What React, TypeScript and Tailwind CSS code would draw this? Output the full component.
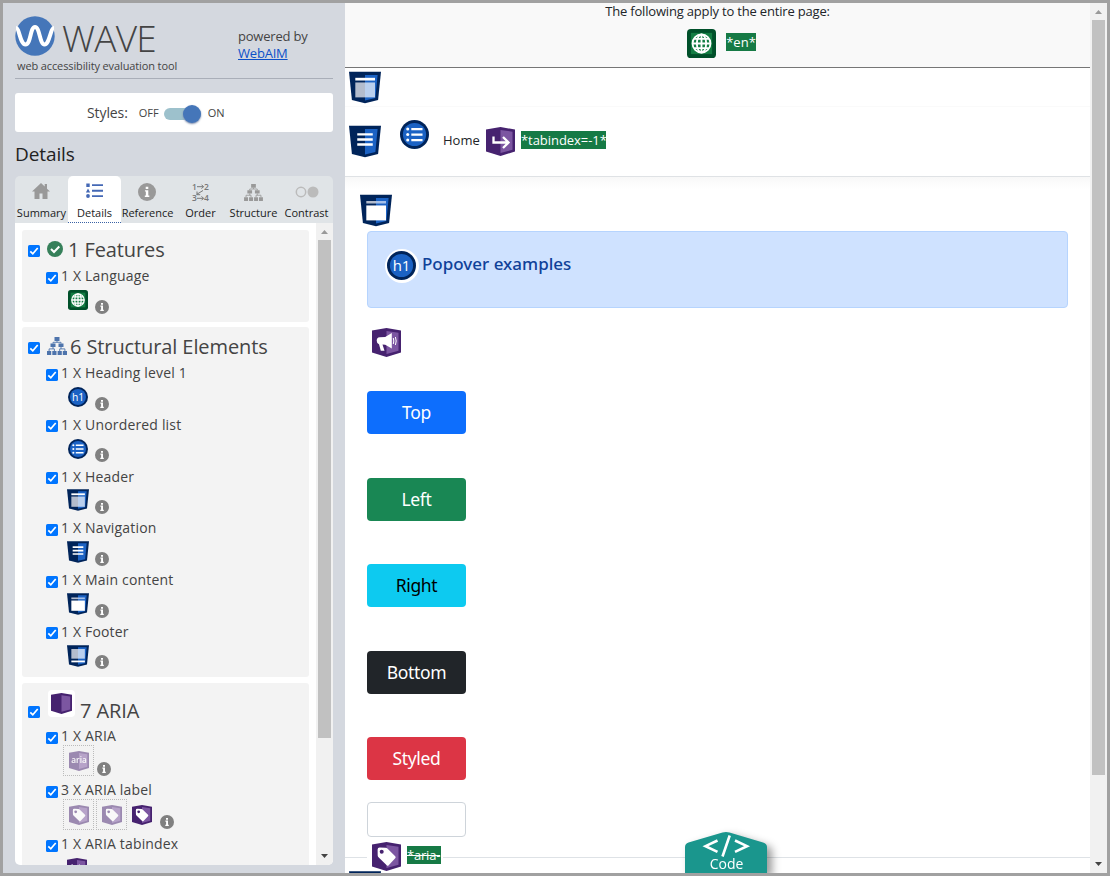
import type { ReactNode } from 'react'

type ShieldKind = 'header' | 'nav' | 'main' | 'footer'
type AriaKind = 'blank' | 'aria' | 'label' | 'tabindex' | 'live'

const structure: { label: string; icon: ReactNode }[] = [
  { label: '1 X Heading level 1', icon: <HeadingIcon className="ml-[2.5px] size-5" /> },
  { label: '1 X Unordered list', icon: <ListIcon className="ml-[2.5px] size-5" /> },
  { label: '1 X Header', icon: <Shield kind="header" className="-mt-0.5 ml-[1.5px] size-[22px]" /> },
  { label: '1 X Navigation', icon: <Shield kind="nav" className="-mt-px ml-[1.5px] size-[22px]" /> },
  { label: '1 X Main content', icon: <Shield kind="main" className="-mt-px ml-[1.5px] size-[22px]" /> },
  { label: '1 X Footer', icon: <Shield kind="footer" className="-mt-px ml-[1.5px] size-[22px]" /> },
]

const buttons = [
  { label: 'Top', style: 'bg-[#0d6efd] text-white' },
  { label: 'Left', style: 'bg-[#198754] text-white' },
  { label: 'Right', style: 'bg-[#0dcaf0] text-black' },
  { label: 'Bottom', style: 'bg-[#212529] text-white' },
  { label: 'Styled', style: 'bg-[#dc3545] text-white' },
]

function Check() {
  return (
    <svg className="size-3 shrink-0" viewBox="0 0 12 12" fill="none">
      <rect width="12" height="12" rx="1.6" fill="#0075ff" />
      <path d="M2.3 6.3 4.8 8.8 9.7 3" stroke="#fff" strokeWidth="1.7" />
    </svg>
  )
}

function Info({ className = 'size-3.5' }: { className?: string }) {
  return (
    <svg className={className} viewBox="0 0 14 14">
      <circle cx="7" cy="7" r="7" fill="currentColor" />
      <path d="M5.4 5.6H8v4.2h.8v1.1H5.3V9.8h.8V6.700h-.7zM6 2.900h2v1.800H6z" fill="#fff" />
    </svg>
  )
}

function Globe({ className }: { className: string }) {
  return (
    <svg className={className} viewBox="0 0 30 30" fill="none">
      <rect width="30" height="30" rx="4" fill="#00502a" />
      <path d="M4 4h22v22H4z" fill="#137d43" />
      <g stroke="#fff" strokeWidth="1.9">
        <circle cx="15" cy="15" r="9.3" />
        <ellipse cx="15" cy="15" rx="4.8" ry="9.3" />
        <path d="M15 5.7v18.6M5.7 15h18.6M7.4 10.2h15.2M7.4 19.8h15.2" />
      </g>
    </svg>
  )
}

function Tree({ className }: { className: string }) {
  return (
    <svg className={className} viewBox="0 0 20 18" fill="currentColor">
      <path d="M7.5 0h5v4h-5zM3.5 6.5h5V10h-5zM11.5 6.5h5V10h-5zM0 14h4.2v4H0zM5.3 14h4.2v4H5.3zM10.6 14h4.2v4h-4.2zM15.8 14H20v4h-4.2z" />
      <path
        d="M10 4v1.3M6 6.5V5.3h8v1.2M6 10v1.9M2.1 14v-2.1h5.3V14M14 10v1.9M12.7 14v-2.1h5.2V14"
        fill="none"
        stroke="currentColor"
        strokeWidth=".9"
      />
    </svg>
  )
}

function HeadingIcon({ className }: { className: string }) {
  return (
    <svg className={className} viewBox="0 0 30 30">
      <circle cx="15" cy="15" r="15" fill="#00245a" />
      <circle cx="15" cy="15" r="12" fill="#1b62c4" />
      <text x="15" y="21" fill="#fff" fontSize="15.500" textAnchor="middle" fontFamily="Open Sans, sans-serif">
        h1
      </text>
    </svg>
  )
}

function ListIcon({ className }: { className: string }) {
  return (
    <svg className={className} viewBox="0 0 30 30">
      <circle cx="15" cy="15" r="15" fill="#00245a" />
      <circle cx="15" cy="15" r="12" fill="#1b62c4" />
      <g fill="#fff">
        <circle cx="8" cy="9.3" r="1.6" />
        <circle cx="8" cy="15" r="1.6" />
        <circle cx="8" cy="20.7" r="1.6" />
        <path d="M11.7 8.2h11.6v2.3H11.7zM11.7 13.9h11.6v2.3H11.7zM11.7 19.6h11.6v2.3H11.7z" />
      </g>
    </svg>
  )
}

function Shield({ kind, className }: { kind: ShieldKind; className: string }) {
  return (
    <svg className={className} viewBox="0 0 33 33">
      <path d="M0 .3h33l-3 29L16.5 32.7 3 29.3z" fill="#00245a" />
      <path d="M16.5 3.5h13l-2.3 23.7-10.7 2.6z" fill="#1b62c4" />
      {kind === 'nav' && (
        <path d="M8.5 8h16v2.4h-16zM8.5 13.2h16v2.4h-16zM8.5 18.4h16v2.4h-16z" fill="#fff" />
      )}
      {kind === 'header' && (
        <>
          <path d="M6.5 6.5h20.3v2.8H6.5z" fill="#fff" />
          <path d="M6.5 11.3h10v15.4h-10z" fill="#b3bccd" />
          <path d="M16.5 11.3h10.3v15.4H16.5z" fill="#b9cfee" />
        </>
      )}
      {kind === 'main' && (
        <>
          <path d="M6.5 6.7h10v2.6h-10z" fill="#b3bccd" />
          <path d="M16.5 6.7h10.3v2.6H16.5z" fill="#a4c0ea" />
          <path d="M6.5 11.3h20.3v15.4H6.5z" fill="#fff" />
        </>
      )}
      {kind === 'footer' && (
        <>
          <path d="M6.5 6h10v14.5h-10z" fill="#b3bccd" />
          <path d="M16.5 6h10.3v14.5H16.5z" fill="#b9cfee" />
          <path d="M6.5 23.3h20.3V26H6.5z" fill="#fff" />
        </>
      )}
    </svg>
  )
}

function Aria({ kind, className }: { kind: AriaKind; className: string }) {
  return (
    <svg className={className} viewBox="0 0 29 29" fill="none">
      <path d="M0 2.5 14.5 0 29 2.5v22L14.5 29 0 24.5z" fill="#46226f" />
      <path d="M14.5 3 26.5 4.7v18L14.5 26z" fill="#7c56a1" />
      {kind === 'aria' && (
        <text x="14.5" y="17.5" fill="#fff" fontSize="12" fontWeight="600" textAnchor="middle" fontFamily="Open Sans, sans-serif">
          aria
        </text>
      )}
      {kind === 'label' && (
        <>
          <path
            d="M5.6 7.5q0-2 2-2l6 .2q1 0 1.8.8l7.8 7.7q1 1 0 2l-6.5 7q-1 1-2 0l-8.2-8q-.7-.7-.8-1.7z"
            fill="#fff"
          />
          <circle cx="9.7" cy="9.8" r="2" fill="#46226f" />
        </>
      )}
      {kind === 'tabindex' && (
        <path d="M7.5 9.500v6h14M17 10l5.500 5.500-5.500 5.500" stroke="#fff" strokeWidth="2.300" />
      )}
      {kind === 'live' && (
        <>
          <path
            d="M19.8 5v15.5l-6.6-3.8-2.7-.2 2 6.2H8.8L7 16.3q-2.3-.9-2.3-3.6 0-3 2.9-3.4l5.6-.3z"
            fill="#fff"
          />
          <path d="M21.3 10q1 3 0 6M23.4 9q1.6 4 0 8" stroke="#fff" />
        </>
      )}
    </svg>
  )
}

function Ghost({ kind }: { kind: AriaKind }) {
  return (
    <span className="mr-0.5 grid size-[31px] place-items-center border border-dotted border-[#bbb]">
      <Aria kind={kind} className="size-5 opacity-50" />
    </span>
  )
}

function Detail({ label, children }: { label: string; children: ReactNode }) {
  return (
    <li>
      <div className="flex h-[18px] items-center gap-[3px] pl-6 text-[14px] leading-[18px]">
        <span className="mt-[3px]">
          <Check />
        </span>
        <span className="tracking-[0.17px] whitespace-nowrap">{label}</span>
      </div>
      {children}
    </li>
  )
}

function DetailIcon({ children }: { children: ReactNode }) {
  return (
    <div className="flex h-[33.8px] items-start pl-[43px] pt-[5px] text-[#808080]">
      <span className="flex w-[30px] shrink-0">{children}</span>
      <Info className="mt-[9.5px] size-3.5" />
    </div>
  )
}

function Sidebar() {
  return (
    <aside className="flex w-[342px] shrink-0 flex-col bg-[#d4d8df] pl-3 text-[#444]">
      <div className="flex h-[76px] w-[318px] border-b border-[#a9aeb8]">
        <div className="w-[223px]">
          <div className="flex h-[54px] items-start gap-[7px] pt-[13px]">
            <svg className="size-10" viewBox="0 0 40 40" fill="none">
              <circle cx="20" cy="20" r="19.7" fill="#4576b9" />
              <path
                d="M1 12C4.5 12 5 28.5 10.5 28.5S15 11 20 11s4.5 17.5 9.5 17.5S35.5 12 39 12"
                stroke="#fff"
                strokeWidth="4"
              />
            </svg>
            <span className="mt-1 text-[37px] leading-9 font-light tracking-[-0.8px]">WAVE</span>
          </div>
          <p className="pl-0.5 text-[11px] leading-[18px] tracking-[-0.12px] whitespace-nowrap">
            web accessibility evaluation tool
          </p>
        </div>
        <p className="pt-[25px] text-[13px] leading-[17px] tracking-[-0.2px]">
          powered by
          <br />
          <a href="#webaim" className="text-[#0b50c8] underline">
            WebAIM
          </a>
        </p>
      </div>

      <div className="mt-3.5 flex h-[39px] w-[318px] items-center rounded-[3px] bg-white pl-[72px] text-[11px]">
        <span className="mr-[11px] text-[14px] tracking-[-0.1px]">Styles:</span>
        <span className="mt-0.5">OFF</span>
        <span className="mt-0.5 ml-[5px] flex h-3 w-[37px] items-center justify-end rounded-full bg-[#9dc1cc]">
          <span className="size-[18px] shrink-0 rounded-full bg-[#4576b9] shadow-[0_1px_2px_#7788aa]" />
        </span>
        <span className="mt-0.5 ml-[7px]">ON</span>
      </div>

      <h2 className="h-11 pt-2.5 text-[19px] leading-6 tracking-[-0.1px] text-[#222]">Details</h2>

      <nav className="grid h-[47px] w-[318px] grid-cols-6 rounded-t-[5px] bg-[#e0e4e7] text-[11px] text-[#1b1b1b]">
        <Tab label="Summary">
          <svg className="mr-0.5 mb-0.5 h-4 w-[18px]" viewBox="0 0 18 16" fill="currentColor">
            <path d="M9 0 0 8.5h2.5V16h5v-5.5h3V16h5V8.5H18l-3-2.8V1h-2.3v2.5z" />
          </svg>
        </Tab>
        <Tab label="Details" active>
          <svg className="mb-[3px] h-4 w-[17px]" viewBox="0 0 17 16" fill="currentColor">
            <path d="M.3.5h3.4v3.4H.3zM2 5.5l2.2 4H-.2zM6 1.2h11v1.9H6zM6 6.8h11v1.9H6zM6 12.2h11v1.9H6z" />
            <circle cx="2" cy="13" r="1.9" />
          </svg>
        </Tab>
        <Tab label="Reference">
          <Info className="mr-0.5 size-[18px]" />
        </Tab>
        <Tab label="Order">
          <svg className="-mt-px h-[22px] w-5 text-[#777]" viewBox="0 -2 20 22" fill="currentColor">
            <g fontSize="8.5" fontWeight="600" fontFamily="Open Sans, sans-serif">
              <text x="1" y="6.7">1</text>
              <text x="13" y="6.7">2</text>
              <text x="1" y="18.3">3</text>
              <text x="13" y="18.3">4</text>
            </g>
            <path
              d="M6 3.7h6.5M10.5 1.7l2 2-2 2M6 15.3h6.5M10.5 13.3l2 2-2 2M12 7.5l-6.500 4M6 8.500v3.200h3.200"
              fill="none"
              stroke="currentColor"
            />
          </svg>
        </Tab>
        <Tab label="Structure">
          <Tree className="h-[17px] w-[19px]" />
        </Tab>
        <Tab label="Contrast">
          <svg className="h-3 w-6 text-[#bbb]" viewBox="0 0 24 12">
            <circle cx="6" cy="6" r="4.7" fill="none" stroke="currentColor" strokeWidth="1.5" />
            <circle cx="18" cy="6" r="5.5" fill="currentColor" />
          </svg>
        </Tab>
      </nav>

      <div className="flex h-[642px] w-[318px] overflow-hidden rounded-b-[5px] bg-white">
        <div className="w-[301px] pl-[7px] pt-[7px]">
          <section className="mb-[5px] h-[92px] w-[287px] rounded-[3px] bg-[#f3f3f3]">
            <Category title="1 Features">
              <svg className="mr-[5px] mb-px size-4" viewBox="0 0 16 16" fill="none">
                <circle cx="8" cy="8" r="8" fill="#36805a" />
                <path d="m4 8 3 3 5.3-5.5" stroke="#fff" strokeWidth="2" />
              </svg>
            </Category>
            <ul>
              <Detail label="1 X Language">
                <DetailIcon>
                  <Globe className="ml-[2.5px] size-5" />
                </DetailIcon>
              </Detail>
            </ul>
          </section>

          <section className="mb-1.5 h-[350px] w-[287px] rounded-[3px] bg-[#f3f3f3]">
            <Category title="6 Structural Elements">
              <Tree className="mr-[3px] mb-0.5 h-[18px] w-5 text-[#4e74ac]" />
            </Category>
            <ul>
              {structure.map((item) => (
                <Detail key={item.label} label={item.label}>
                  <DetailIcon>{item.icon}</DetailIcon>
                </Detail>
              ))}
            </ul>
          </section>

          <section className="h-[240px] w-[287px] rounded-[3px] bg-[#f3f3f3]">
            <div className="flex h-11 items-start pl-1.5">
              <span className="mt-[23px] mr-2">
                <Check />
              </span>
              <span className="mt-[7px] grid size-[27px] place-items-center rounded-sm bg-white">
                <Aria kind="blank" className="size-[21px]" />
              </span>
              <h3 className="mt-3.5 ml-[5px] text-[20px] leading-7 tracking-[-0.1px]">7 ARIA</h3>
            </div>
            <ul>
              <Detail label="1 X ARIA">
                <div className="flex h-9 items-start pl-[41px] text-[#808080]">
                  <Ghost kind="aria" />
                  <Info className="mt-[17px] ml-px size-3.5" />
                </div>
              </Detail>
              <Detail label="3 X ARIA label">
                <div className="flex h-9 items-start pl-[41px] text-[#808080]">
                  <Ghost kind="label" />
                  <Ghost kind="label" />
                  <Aria kind="label" className="mt-1.5 ml-[3px] size-5" />
                  <Info className="mt-4 ml-2 size-3.5" />
                </div>
              </Detail>
              <Detail label="1 X ARIA tabindex">
                <div className="flex pl-[45px] pt-[5px]">
                  <Aria kind="tabindex" className="size-5" />
                </div>
              </Detail>
            </ul>
          </section>
        </div>
        <Scrollbar thumb="h-[498px]" />
      </div>
    </aside>
  )
}

function Tab({ label, active, children }: { label: string; active?: boolean; children: ReactNode }) {
  return (
    <a
      href="#tab"
      className={
        active
          ? 'flex flex-col items-center rounded-t-[5px] border-b border-dotted border-[#3a62a5] bg-white text-[#4468b5]'
          : 'flex flex-col items-center text-[#999]'
      }
    >
      <span className="flex h-[30px] shrink-0 items-center pt-0.5">{children}</span>
      <span className="leading-[14px] whitespace-nowrap text-[#1b1b1b]">{label}</span>
    </a>
  )
}

function Category({ title, children }: { title: string; children: ReactNode }) {
  return (
    <div className="flex h-[37px] items-center pl-1.5 pt-0.5">
      <span className="mt-[3px] mr-[7px]">
        <Check />
      </span>
      {children}
      <h3 className="text-[20px] leading-7 tracking-[-0.1px]">{title}</h3>
    </div>
  )
}

function Scrollbar({ thumb }: { thumb: string }) {
  return (
    <div className="flex w-[17px] shrink-0 flex-col items-center bg-[#f1f1f1]">
      <svg className="h-[17px] w-[7px] shrink-0" viewBox="0 0 7 17">
        <path d="M0 11h7L3.5 7z" fill="#999" />
      </svg>
      <div className={`w-[13px] shrink-0 bg-[#c1c1c1] ${thumb}`} />
      <svg className="mt-auto h-[17px] w-[7px] shrink-0" viewBox="0 0 7 17">
        <path d="M0 6h7l-3.5 4z" fill="#444" />
      </svg>
    </div>
  )
}

function Page() {
  return (
    <main className="relative flex w-[745px] shrink-0 flex-col overflow-hidden bg-white text-[13px] text-[#212529]">
      <div className="h-[65px] shrink-0 border-b border-[#767676] bg-[#f9f9f9] text-center">
        <p className="-mt-px leading-[18px] tracking-[-0.18px]">The following apply to the entire page:</p>
        <div className="mt-[9px] flex justify-center gap-2.5 pl-2">
          <Globe className="size-[29px]" />
          <span className="mt-1 h-[18px] bg-[#167a45] leading-[18px] text-white">*en*</span>
        </div>
      </div>

      <header className="h-[109px] shrink-0 border-b border-[#dfe2e5]">
        <div className="h-[38px] pt-[3px] pl-1">
          <Shield kind="header" className="h-[33px] w-8" />
        </div>
        <nav className="flex h-[70px] items-start border-t border-[#fafafa] pl-1">
          <Shield kind="nav" className="mt-[18px] h-[33px] w-8" />
          <ListIcon className="mt-[13px] ml-[19px] size-[29px]" />
          <a href="#home" className="mt-6 ml-3.5 w-[38px] leading-[18px]">
            Home
          </a>
          <Aria kind="tabindex" className="mt-5 ml-[5px] size-[29px]" />
          <span className="mt-6 ml-1.5 h-[18px] w-[85px] bg-[#167a45] leading-[18px] tracking-[-0.05px] whitespace-nowrap text-white">
            *tabindex=-1*
          </span>
        </nav>
      </header>

      <div className="flex flex-col items-start bg-linear-to-b from-[#f8f8f8] to-white to-[12px] pl-[22px] pt-[17px]">
        <Shield kind="main" className="-ml-[7px] h-[33px] w-8" />
        <div className="mt-1 flex h-[77px] w-[701px] items-start rounded border border-[#b6d4fe] bg-[#cfe2ff] pt-4 pl-[17px]">
          <span className="mt-px flex size-[34px] rounded-full bg-white pt-0.5 pl-0.5">
            <HeadingIcon className="size-[29px]" />
          </span>
          <h1 className="ml-[3px] font-['Noto_Sans'] text-[17px] leading-8 font-medium text-[#0f4199]">
            Popover examples
          </h1>
        </div>
        <Aria kind="live" className="mt-5 ml-[5px] size-[29px]" />
        <div className="mt-[34px] flex flex-col gap-[43.5px] font-['Noto_Sans'] text-[17.5px] tracking-[-0.35px]">
          {buttons.map((button) => (
            <button key={button.label} className={`h-[43px] w-[99px] rounded ${button.style}`}>
              {button.label}
            </button>
          ))}
        </div>
        <input className="mt-[22px] h-[35px] w-[99px] rounded border border-[#ced4da]" aria-label="search" />
        <div className="mt-[5px] ml-[5px] flex w-[70px] shrink-0 items-start gap-1.5">
          <Aria kind="label" className="size-[29px] shrink-0" />
          <span className="mt-[4px] h-[18px] w-[34px] overflow-hidden bg-[#167a45] leading-[18px] tracking-[-0.2px] whitespace-nowrap text-white line-through">
            *aria-
          </span>
        </div>
        <Shield kind="footer" className="-ml-[18px] size-8" />
      </div>

      <hr className="absolute top-[854px] left-0 w-[22px] border-[#dee2e6]" />
      <hr className="absolute top-[854px] right-0 left-[98px] border-[#dee2e6]" />

      <a
        href="#code"
        className="absolute top-[829px] left-[340px] h-[41px] w-[82px] drop-shadow-[5px_4px_4px_rgba(0,0,0,0.4)]"
      >
        <svg className="h-[41px] w-[82px]" viewBox="0 0 82 41" fill="none">
          <path d="M0 41V15q0-3.5 3.5-4.5L37.5 .6q3.5-1 7 0L78 10.5q4 1 4 4.5v26z" fill="#1a968d" />
          <path d="M32.500 8.500 20.500 14.200l12 5.700M50 8.500l12 5.700-12 5.700M44.700 3.500l-7.200 21" stroke="#fff" strokeWidth="2.600" />
          <text x="41.5" y="37" fill="#fff" fontSize="14" textAnchor="middle" fontFamily="Open Sans, sans-serif">
            Code
          </text>
        </svg>
      </a>
    </main>
  )
}

export default function App() {
  return (
    <div className="flex h-[876px] w-[1110px] overflow-hidden border-[3px] border-[#a1a1a1] font-['Open_Sans',sans-serif]">
      <Sidebar />
      <Page />
      <Scrollbar thumb="h-[755px]" />
    </div>
  )
}
